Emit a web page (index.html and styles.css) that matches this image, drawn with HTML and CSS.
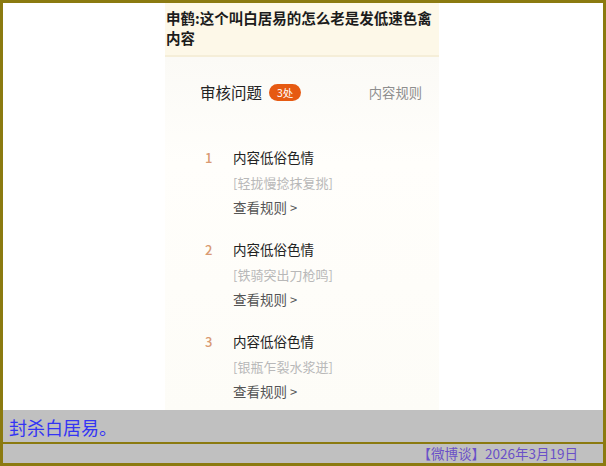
FILE: index.html
```html
<!DOCTYPE html>
<html lang="zh-CN">
  <head>
    <meta charset="UTF-8" />
    <meta name="viewport" content="width=device-width,initial-scale=1.0" />
    <title>封杀白居易</title>
    <link rel="stylesheet" href="styles.css">
  </head>
  <body>
    <div class="frame">
      <div class="stage">
        <div class="shot">
          <div class="shot-head">申鹤:这个叫白居易的怎么老是发低速色禽内容</div>
          <div class="shot-panel">
            <div class="tabs">
              <div class="tab-main">
                <span>审核问题</span>
                <span class="badge">3处</span>
              </div>
              <div class="tab-side">内容规则</div>
            </div>
            <ul class="issues">
              <li class="issue">
                <span class="issue-no">1</span>
                <div class="issue-body">
                  <div class="issue-title">内容低俗色情</div>
                  <div class="issue-quote">[轻拢慢捻抹复挑]</div>
                  <div class="issue-link">查看规则 <span class="chev">&gt;</span></div>
                </div>
              </li>
              <li class="issue">
                <span class="issue-no">2</span>
                <div class="issue-body">
                  <div class="issue-title">内容低俗色情</div>
                  <div class="issue-quote">[铁骑突出刀枪鸣]</div>
                  <div class="issue-link">查看规则 <span class="chev">&gt;</span></div>
                </div>
              </li>
              <li class="issue">
                <span class="issue-no">3</span>
                <div class="issue-body">
                  <div class="issue-title">内容低俗色情</div>
                  <div class="issue-quote">[银瓶乍裂水浆迸]</div>
                  <div class="issue-link">查看规则 <span class="chev">&gt;</span></div>
                </div>
              </li>
            </ul>
          </div>
        </div>
      </div>
      <div class="caption">封杀白居易。</div>
      <div class="footer">【微博谈】2026年3月19日</div>
    </div>
  </body>
</html>
```

FILE: styles.css
```css
html,
body {
  margin: 0;
  padding: 0;
  background: #fff;
}
body {
  font-family: "Noto Sans CJK SC", "Noto Sans", sans-serif;
}
.frame {
  width: 606px;
  height: 466px;
  box-sizing: border-box;
  border: 3px solid #8b7a10;
  display: flex;
  flex-direction: column;
  overflow: hidden;
}
.stage {
  height: 407px;
  background: #fff;
  display: flex;
  justify-content: center;
  padding-right: 2px;
}
.shot {
  width: 274px;
  display: flex;
  flex-direction: column;
  background: #fdfcf8;
}
.shot-head {
  height: 54px;
  box-sizing: border-box;
  padding: 5px 2px 0 1px;
  background: #fdf8e8;
  border-bottom: 2px solid #f5eed8;
  font-size: 14.5px;
  font-weight: 700;
  line-height: 20px;
  color: #1c1c1c;
}
.shot-panel {
  flex: 1;
  background: linear-gradient(180deg, #fbfaf6 0%, #fffefb 30%, #fdfcf7 100%);
}
.tabs {
  display: flex;
  justify-content: space-between;
  align-items: center;
  padding: 24px 17px 0 35px;
  height: 22px;
}
.tab-main {
  display: flex;
  align-items: center;
  gap: 7px;
  font-size: 15.5px;
  color: #222;
}
.badge {
  background: #e65a12;
  color: #fff;
  font-size: 10.5px;
  line-height: 17px;
  padding: 0 8px;
  border-radius: 9px;
}
.tab-side {
  font-size: 13.3px;
  color: #8e8e8e;
}
.issues {
  list-style: none;
  margin: 42px 0 0 0;
  padding: 0 0 0 40px;
  display: flex;
  flex-direction: column;
  gap: 17px;
}
.issue {
  display: flex;
}
.issue-no {
  width: 28px;
  font-size: 13px;
  line-height: 25px;
  color: #d99a72;
  font-weight: 500;
}
.issue-body {
  font-size: 13.5px;
  line-height: 25px;
}
.issue-title {
  color: #222;
}
.issue-quote {
  color: #b8b8b8;
  font-size: 13px;
}
.issue-link {
  color: #555;
}
.chev {
  font-size: 13px;
}
.caption {
  height: 32px;
  background: #c0c0c0;
  border-bottom: 2px solid #8b7a10;
  padding-left: 6px;
  font-size: 18px;
  line-height: 34px;
  color: #3434f4;
}
.footer {
  flex: 1;
  background: #c0c0c0;
  text-align: right;
  padding-right: 25px;
  font-size: 13.5px;
  line-height: 19px;
  color: #6a50c8;
}
```
